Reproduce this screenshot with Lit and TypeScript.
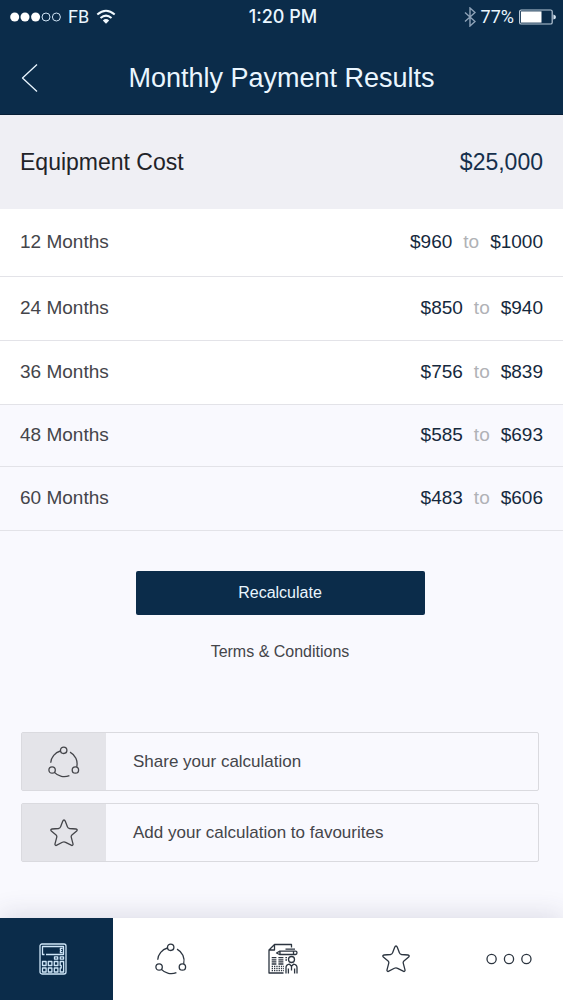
import { LitElement, html, css, svg } from "lit";
import { customElement, state } from "lit/decorators.js";

interface Term {
  months: number;
  low: number;
  high: number;
}

const shareIcon = html`<svg class="icon" width="32" height="32" viewBox="0 0 32 32" aria-hidden="true">
  <circle cx="15.7" cy="4.3" r="3.2" />
  <circle cx="4.1" cy="24" r="3.2" />
  <circle cx="27.4" cy="24" r="3.2" />
  <path d="M12.4 5A13.2 13.2 0 0 0 2.7 16.7M22 6.1A13.2 13.2 0 0 1 28.7 20.9M6.4 26.4A13.2 13.2 0 0 0 21.4 29.6" />
</svg>`;

const starIcon = html`<svg class="icon" width="28" height="28" viewBox="0 0 28 28" aria-hidden="true">
  <path
    d="M14 1C14.7 1 15 1.5 15.3 2.3L17.3 7.6C17.7 8.8 18.3 9.3 19.5 9.5L26 10C27.3 10.2 27.5 11.2 26.7 11.9L21.9 16C21.1 16.7 21 17.3 21.3 18.3L23 24.8C23.3 26.2 22.2 26.9 21.2 26.2L15.6 23.3C14.5 22.7 13.5 22.7 12.4 23.3L6.8 26.2C5.8 26.9 4.7 26.2 5 24.8L6.7 18.3C7 17.3 6.9 16.7 6.1 16L1.3 11.9C.5 11.2 .7 10.2 2 10L8.5 9.5C9.7 9.3 10.3 8.8 10.7 7.6L12.7 2.3C13 1.5 13.3 1 14 1Z"
  />
</svg>`;

const calculatorIcon = html`<svg class="icon" width="28" height="32" viewBox="0 0 28 32" aria-hidden="true">
  <rect x="1" y="1" width="26" height="30" rx="2" />
  <path d="M7 11.5H24.5V3.5H3.5V11.5H5.5M23.5 5.3H21.4V7L22.4 7.5L21.4 8V9.7H23.5" />
  <rect x="15.5" y="13.8" width="3.2" height="2.4" />
  <rect x="21.3" y="13.8" width="3.2" height="2.4" />
  ${[3.5, 9.3, 15.3].map(
    (x) => svg`<rect x=${x} y="18.5" width="3.6" height="4" /><rect x=${x} y="25" width="3.6" height="4" />`
  )}
  <path d="M24.6 18.5H21.2V22.4H22.2V25H21.2V29H24.6Z" />
</svg>`;

const reportIcon = html`<svg class="icon" width="30" height="32" viewBox="0 0 30 32" aria-hidden="true">
  <path d="M23.5 4.5V1.5H6.5L1 7V30H15.5M6.5 1.5V7H1" />
  <path d="M8.5 10L11.5 8.2H27.5Q29 8.2 29 9.8T27.5 11.5H11.5ZM12 8.2V11.5M25.5 8.2V11.5M17.5 6.2H27" />
  <path d="M3.7 14.7H8.4M3.7 16.8H8.4M3.7 18.9H8.4M3.7 21H8.4M10.4 14.7H15.4M10.4 16.8H15.4M10.4 18.9H15.4M10.4 21H15.4M17.4 14.7H19M17.4 17H19" />
  <path stroke-dasharray="1.3 1" d="M3.7 23.4H16M3.7 25.5H16M3.7 27.6H16" />
  <circle cx="23.5" cy="16.5" r="3" />
  <path d="M18 30.5V24.5Q18 21.8 21.5 21.2L23.5 23.3L25.5 21.2Q29 21.8 29 24.5V30.5M20.4 30.5V25.5M26.6 30.5V25.5M23.5 23.5V27.5" />
</svg>`;

const moreIcon = html`<svg class="icon" width="46" height="12" viewBox="0 0 46 12" aria-hidden="true">
  <circle cx="5.6" cy="6" r="4.6" />
  <circle cx="23" cy="6" r="4.6" />
  <circle cx="40.4" cy="6" r="4.6" />
</svg>`;

@customElement("app-root")
export class AppRoot extends LitElement {
  @state() private cost = 25000;

  @state() private terms: Term[] = [
    { months: 12, low: 960, high: 1000 },
    { months: 24, low: 850, high: 940 },
    { months: 36, low: 756, high: 839 },
    { months: 48, low: 585, high: 693 },
    { months: 60, low: 483, high: 606 },
  ];

  static styles = css`
    * {
      box-sizing: border-box;
    }
    :host {
      display: flex;
      flex-direction: column;
      min-height: 100vh;
      background: #f9f9fe;
      color: #44454a;
      font-family: "Liberation Sans", Arial, sans-serif;
    }
    button {
      border: 0;
      padding: 0;
      background: none;
      color: inherit;
      font: inherit;
      cursor: pointer;
    }
    a {
      color: inherit;
      text-decoration: none;
    }
    .icon {
      display: block;
      fill: none;
      stroke: currentColor;
      stroke-width: 1.3;
      stroke-linejoin: round;
    }
    .top {
      background: #0b2c4a;
      color: #eaf6ff;
      border-bottom: 1px solid #061e36;
    }
    .status {
      display: grid;
      grid-template-columns: 1fr auto 1fr;
      align-items: center;
      height: 34px;
      padding: 0 7px 0 10px;
      font: 18px/20px Roboto, sans-serif;
    }
    .side {
      display: flex;
      align-items: center;
      gap: 7px;
    }
    .side.end {
      justify-content: flex-end;
      gap: 5px;
    }
    .time {
      font: 500 18px/20px Inter, sans-serif;
    }
    .bar {
      display: grid;
      grid-template-columns: 56px 1fr 56px;
      align-items: center;
      height: 80px;
      padding-top: 8px;
    }
    .back {
      display: grid;
      place-items: center;
      height: 48px;
      padding-left: 4px;
    }
    .title {
      margin: 0;
      text-align: center;
      font-size: 27px;
      line-height: 32px;
      font-weight: 400;
    }
    .cost {
      display: flex;
      justify-content: space-between;
      align-items: center;
      height: 94px;
      margin: 0;
      padding: 0 20px;
      background: #efeff4;
      font-size: 23px;
      line-height: 28px;
    }
    .cost dt {
      color: #222328;
    }
    .cost dd {
      margin: 0;
      color: #16304c;
    }
    .terms {
      width: 100%;
      border-collapse: separate;
      border-spacing: 0;
      font-size: 19px;
      line-height: 24px;
    }
    .terms th,
    .terms td {
      height: 64px;
      padding: 0 20px 2px;
      background: #ffffff;
      border-bottom: 1px solid #e3e3e8;
      font-weight: 400;
      text-align: left;
    }
    .terms .first > * {
      height: 68px;
    }
    .terms .tinted > * {
      background: #f9f9fe;
    }
    .terms .tight > * {
      height: 62px;
    }
    .terms .range {
      color: #15293d;
      text-align: right;
    }
    .to {
      margin: 0 11px;
      color: #b0b2b6;
    }
    .content {
      flex: 1;
      display: flex;
      flex-direction: column;
      align-items: center;
      padding: 40px 24px 40px 21px;
    }
    .recalc {
      width: 100%;
      max-width: 289px;
      height: 44px;
      border-radius: 2px;
      background: #0b2c4a;
      color: #eaf6ff;
      font-size: 16px;
      line-height: 20px;
    }
    .legal {
      margin: 27px 0 70px;
      font-size: 16px;
      line-height: 20px;
    }
    .actions {
      display: grid;
      gap: 12px;
      width: 100%;
    }
    .action {
      display: grid;
      grid-template-columns: 84px 1fr;
      align-items: stretch;
      height: 59px;
      border: 1px solid #dadadf;
      border-radius: 2px;
      font-size: 17px;
      line-height: 20px;
      text-align: left;
    }
    .action .tile {
      display: grid;
      place-items: center;
      background: #e4e4e9;
    }
    .action .label {
      align-self: center;
      padding-left: 27px;
    }
    .tabs {
      position: sticky;
      bottom: 0;
      display: grid;
      grid-template-columns: repeat(5, 1fr);
      height: 82px;
      background: #ffffff;
      color: #2c3540;
      box-shadow: 0 -4px 24px rgba(60, 60, 90, 0.14);
    }
    .tab {
      display: grid;
      place-items: center;
      padding-left: 4px;
    }
    .tab.active {
      background: #0b2c4a;
      color: #cfe6f8;
      padding: 0 6px 0 0;
    }
  `;

  private money(value: number, grouping = false) {
    return "$" + value.toLocaleString("en-US", { useGrouping: grouping });
  }

  private rowClass(index: number) {
    return ["first", "", "", "tinted tight", "tinted"][index] ?? "";
  }

  render() {
    return html`
      <header class="top">
        <div class="status">
          <div class="side">
            <svg width="51" height="10" viewBox="0 0 51 10" aria-hidden="true">
              ${[4.7, 15, 25.6].map((x) => svg`<circle cx=${x} cy="5" r="4.5" fill="#fff" />`)}
              ${[36, 46.4].map(
                (x) => svg`<circle cx=${x} cy="5" r="4" fill="none" stroke="#cfe3f5" stroke-width="1" />`
              )}
            </svg>
            <span>FB</span>
            <svg width="20" height="16" viewBox="0 0 20 16" fill="none" stroke="#f2faff" stroke-width="2" aria-hidden="true">
              <path d="M1.3 5.6Q10 -2 18.7 5.6M4.5 9Q10 4.2 15.5 9" />
              <path d="M6.8 11.4Q10 8.8 13.2 11.4L10 14.8Z" fill="#f2faff" stroke="none" />
            </svg>
          </div>
          <span class="time">1:20 PM</span>
          <div class="side end">
            <svg width="12" height="20" viewBox="0 0 12 20" fill="none" stroke="#8fa3b8" stroke-width="1.4" aria-hidden="true">
              <path d="M1 5.5L11 14.5L6 19V1L11 5.5L1 14.5" />
            </svg>
            <span>77%</span>
            <svg width="37" height="16" viewBox="0 0 37 16" aria-hidden="true">
              <rect x="0.6" y="1" width="32.6" height="14" rx="1.6" fill="none" stroke="#b9c9d8" stroke-width="1.2" />
              <rect x="2" y="2.4" width="20.5" height="11.2" fill="#fff" />
              <path d="M34.4 5.4Q37 6 37 8T34.4 10.6Z" fill="#d8e6f2" />
            </svg>
          </div>
        </div>
        <div class="bar">
          <button class="back" aria-label="Back">
            <svg class="icon" width="18" height="30" viewBox="0 0 18 30" aria-hidden="true">
              <path d="M16 1.5L1.5 15L16 28.5" />
            </svg>
          </button>
          <h1 class="title">Monthly Payment Results</h1>
        </div>
      </header>

      <dl class="cost">
        <dt>Equipment Cost</dt>
        <dd>${this.money(this.cost, true)}</dd>
      </dl>

      <table class="terms" aria-label="Monthly payments">
        <tbody>
          ${this.terms.map(
            (t, i) => html`<tr class=${this.rowClass(i)}>
              <th scope="row">${t.months} Months</th>
              <td class="range">${this.money(t.low)}<span class="to">to</span>${this.money(t.high)}</td>
            </tr>`
          )}
        </tbody>
      </table>

      <main class="content">
        <button class="recalc">Recalculate</button>
        <a class="legal" href="#terms">Terms &amp; Conditions</a>
        <div class="actions">
          <button class="action">
            <span class="tile">${shareIcon}</span>
            <span class="label">Share your calculation</span>
          </button>
          <button class="action">
            <span class="tile">${starIcon}</span>
            <span class="label">Add your calculation to favourites</span>
          </button>
        </div>
      </main>

      <nav class="tabs" aria-label="Sections">
        <a class="tab active" href="#calculator" aria-label="Calculator" aria-current="page">${calculatorIcon}</a>
        <a class="tab" href="#share" aria-label="Share">${shareIcon}</a>
        <a class="tab" href="#reports" aria-label="Reports">${reportIcon}</a>
        <a class="tab" href="#favourites" aria-label="Favourites">${starIcon}</a>
        <a class="tab" href="#more" aria-label="More">${moreIcon}</a>
      </nav>
    `;
  }
}
